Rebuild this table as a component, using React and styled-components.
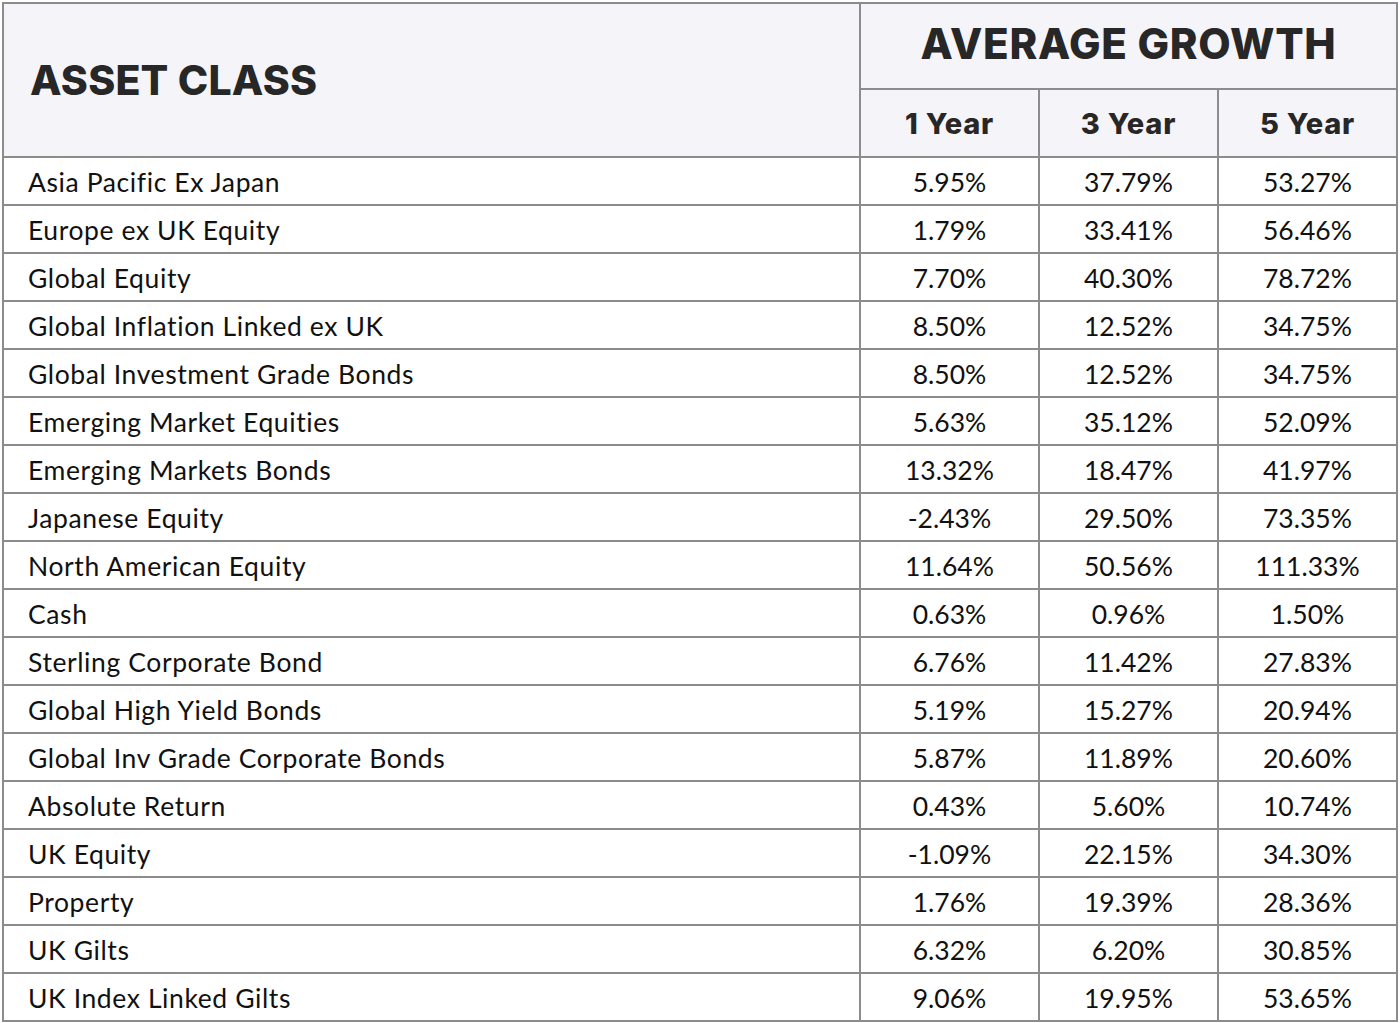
import React from "react";
import styled, { createGlobalStyle } from "styled-components";

const GlobalStyle = createGlobalStyle`
  html, body {
    margin: 0;
    padding: 0;
    background: #ffffff;
  }
  body {
    padding: 2px 2px 0;
  }
`;

const rows = [
  ["Asia Pacific Ex Japan", "5.95%", "37.79%", "53.27%"],
  ["Europe ex UK Equity", "1.79%", "33.41%", "56.46%"],
  ["Global Equity", "7.70%", "40.30%", "78.72%"],
  ["Global Inflation Linked ex UK", "8.50%", "12.52%", "34.75%"],
  ["Global Investment Grade Bonds", "8.50%", "12.52%", "34.75%"],
  ["Emerging Market Equities", "5.63%", "35.12%", "52.09%"],
  ["Emerging Markets Bonds", "13.32%", "18.47%", "41.97%"],
  ["Japanese Equity", "-2.43%", "29.50%", "73.35%"],
  ["North American Equity", "11.64%", "50.56%", "111.33%"],
  ["Cash", "0.63%", "0.96%", "1.50%"],
  ["Sterling Corporate Bond", "6.76%", "11.42%", "27.83%"],
  ["Global High Yield Bonds", "5.19%", "15.27%", "20.94%"],
  ["Global Inv Grade Corporate Bonds", "5.87%", "11.89%", "20.60%"],
  ["Absolute Return", "0.43%", "5.60%", "10.74%"],
  ["UK Equity", "-1.09%", "22.15%", "34.30%"],
  ["Property", "1.76%", "19.39%", "28.36%"],
  ["UK Gilts", "6.32%", "6.20%", "30.85%"],
  ["UK Index Linked Gilts", "9.06%", "19.95%", "53.65%"],
];

const Grid = styled.div`
  width: 1396px;
  box-sizing: border-box;
  display: grid;
  grid-template-columns: 855px 177px 177px 177px;
  grid-template-rows: 84px 66px;
  grid-auto-rows: 46px;
  gap: 2px;
  padding: 2px;
  background: #8c8c8c;
`;

const HeadCell = styled.div`
  background: #f5f4f9;
  color: #272727;
  font-family: Inter, "Noto Sans", sans-serif;
  font-weight: 800;
  display: flex;
  align-items: center;
  justify-content: ${(p) => (p.$left ? "flex-start" : "center")};
  padding-left: ${(p) => (p.$left ? "26px" : "0")};
  font-size: ${(p) => p.$size}px;
  letter-spacing: ${(p) => p.$spacing || 0}px;
  grid-row: ${(p) => p.$rows || "auto"};
  grid-column: ${(p) => p.$cols || "auto"};
  padding-top: ${(p) => p.$top || 0}px;
  padding-bottom: ${(p) => p.$bottom || 0}px;
`;

const Cell = styled.div`
  background: #ffffff;
  color: #111111;
  font-family: Lato, "Open Sans", sans-serif;
  font-size: 26.5px;
  font-variant-ligatures: none;
  display: flex;
  align-items: center;
  padding-top: 1px;
  letter-spacing: ${(p) => (p.$label ? "0.6px" : "0")};
  justify-content: ${(p) => (p.$label ? "flex-start" : "center")};
  padding-left: ${(p) => (p.$label ? "24px" : "0")};
`;

export default function App() {
  return (
    <>
      <GlobalStyle />
      <Grid>
        <HeadCell $left $size={41} $spacing={0.2} $rows="span 2">
          ASSET CLASS
        </HeadCell>
        <HeadCell $size={42} $spacing={0.7} $cols="span 3" $bottom={5}>
          AVERAGE GROWTH
        </HeadCell>
        <HeadCell $size={29} $spacing={0.8} $top={1}>1 Year</HeadCell>
        <HeadCell $size={29} $spacing={0.8} $top={1}>3 Year</HeadCell>
        <HeadCell $size={29} $spacing={0.8} $top={1}>5 Year</HeadCell>
        {rows.map((r) => (
          <React.Fragment key={r[0]}>
            <Cell $label>{r[0]}</Cell>
            <Cell>{r[1]}</Cell>
            <Cell>{r[2]}</Cell>
            <Cell>{r[3]}</Cell>
          </React.Fragment>
        ))}
      </Grid>
    </>
  );
}
